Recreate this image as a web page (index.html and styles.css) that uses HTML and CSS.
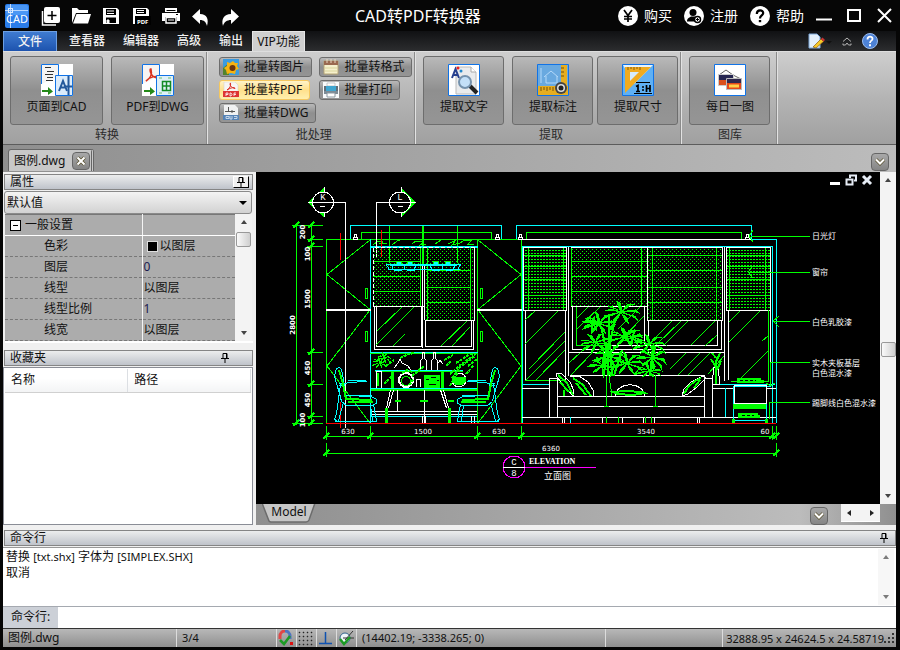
FILE: index.html
```html
<!DOCTYPE html>
<html lang="zh-CN">
<head>
<meta charset="utf-8">
<title>CAD转PDF转换器</title>
<link rel="stylesheet" href="styles.css">
</head>
<body>
<header class="titlebar">
  <div class="quick">
    <svg class="logo" viewBox="0 0 24 24" width="24" height="24" aria-hidden="true">
      <rect width="24" height="24" rx="2" fill="#2b7de9"/><rect x="1" y="1" width="22" height="10" rx="2" fill="#4a97f5"/>
      <path d="M5.500 0V24M0 6.500H23" stroke="#b9d8ff"/><rect x="3.500" y="4.500" width="4" height="4" fill="none" stroke="#dcebff"/>
      <text x="1" y="19" class="logo-text">CAD</text>
    </svg>
    <button aria-label="新建"><svg viewBox="0 0 20 20" width="20" height="20"><rect x="3" y="1" width="16" height="16" rx="2" fill="#fff"/><path d="M11 5v9M6.500 9.500h9" stroke="#000" stroke-width="1.500"/><path d="M1.500 5v14H15" fill="none" stroke="#fff" stroke-width="1.500"/></svg></button>
    <button aria-label="打开"><svg viewBox="0 0 20 20" width="20" height="20"><path d="M1 17V2h5l2 2h9v3H5z" fill="#fff"/><path d="M5.500 8H20l-3 9.500H2z" fill="#fff"/></svg></button>
    <button aria-label="保存"><svg viewBox="0 0 20 20" width="20" height="20"><path d="M2 2h14l2 2v14H2z" fill="#fff"/><path d="M5 3h10v6H5zM5 11.500h10V17H5z" fill="#000"/><path d="M6 5h7M6 7.500h7M6 14h2v3H6z" stroke="#fff" fill="#fff"/></svg></button>
    <button aria-label="另存为PDF"><svg viewBox="0 0 20 20" width="20" height="20"><path d="M2 2h14l2 2v14H2z" fill="#fff"/><path d="M5 3h10v5H5zM4 10h16v9H4z" fill="#000"/><path d="M6 4.500h7M6 6.500h7" stroke="#fff"/><text x="6" y="17.500" class="pdf-text">PDF</text></svg></button>
    <button aria-label="打印"><svg viewBox="0 0 20 20" width="20" height="20"><path d="M4 2h12v4H4zM1 7h18v8h-3v-4H4v4H1z" fill="#fff"/><path d="M5.500 4.500h9" stroke="#000"/><path d="M5 11.500h10v5.500H5z" fill="#000" stroke="#fff" stroke-width="1.500"/><path d="M7 14h6" stroke="#fff"/><path d="M15 8.500h2" stroke="#000"/></svg></button>
    <button aria-label="撤销"><svg viewBox="0 0 20 20" width="20" height="20"><path d="M9 3v5c7 0 9 5 7 12-1-4-3-6-7-6v4L1 10.500z" fill="#fff"/></svg></button>
    <button aria-label="重做"><svg viewBox="0 0 20 20" width="20" height="20"><path d="M10 3v5C3 8 0 13 2 20c1-4 4-6 8-6v4l8-7.500z" fill="#fff"/></svg></button>
  </div>
  <h1>CAD转PDF转换器</h1>
  <div class="account">
    <button><svg viewBox="0 0 20 20" width="20" height="20"><circle cx="10" cy="10" r="10" fill="#fff"/><path d="M6 4l4 5.500L14 4M10 9v7M6 10.500h8M6 13h8" stroke="#000" stroke-width="1.700" fill="none"/></svg>购买</button>
    <button><svg viewBox="0 0 20 20" width="20" height="20"><circle cx="10" cy="10" r="10" fill="#fff"/><circle cx="9" cy="6.500" r="3.500"/><path d="M3 15.500c0-4 3-4 4-5h4c2 1 3 2 3 5z"/><circle cx="13.500" cy="13.500" r="3" fill="#fff" stroke="#000" stroke-width="1.500"/><path d="M13.500 12v3M12 13.500h3" stroke="#000"/></svg>注册</button>
    <button><svg viewBox="0 0 20 20" width="20" height="20"><circle cx="10" cy="10" r="10" fill="#fff"/><path d="M6.800 8c0-5 6.700-4.500 6.400-.8C13 9.500 10 9.500 10 12.500" stroke="#000" stroke-width="2.200" fill="none"/><path d="M8.800 14h2.400v2.200H8.800z"/></svg>帮助</button>
  </div>
  <div class="winctl">
    <button aria-label="最小化"><svg viewBox="0 0 16 16" width="16" height="16"><path d="M0 11.500h16" stroke="#fff" stroke-width="2"/></svg></button>
    <button aria-label="最大化"><svg viewBox="0 0 16 16" width="16" height="16"><rect x="2" y="2" width="12" height="11" fill="none" stroke="#fff" stroke-width="2"/></svg></button>
    <button aria-label="关闭"><svg viewBox="0 0 16 16" width="16" height="16"><path d="M2 1l13 13M15 1L2 14" stroke="#fff" stroke-width="2"/></svg></button>
  </div>
</header>

<nav class="tabs">
  <button class="file">文件</button>
  <button>查看器</button>
  <button>编辑器</button>
  <button>高级</button>
  <button>输出</button>
  <button class="active">VIP功能</button>
  <div class="tab-tools">
    <svg viewBox="0 0 24 16" width="24" height="16" aria-hidden="true"><path d="M1 1h8l3 3v11H1z" fill="#e4f0fb" stroke="#7ea9da"/><path d="M5 14L13 6l2.500 2.500L8 15z" fill="#f7c928" stroke="#8b5a12" stroke-width=".7"/><path d="M13 6l1.500-1.500L17 7l-1.500 1.500z" fill="#c33"/><path d="M18 8h6l-3 3z" fill="#111"/></svg>
    <svg viewBox="0 0 10 10" width="10" height="10" aria-hidden="true"><path d="M1 5.500L5 2l4 3.500M1 7.500V9h2.500L5 7l1.500 2H9V7.500" fill="none" stroke="#b5b5b5"/></svg>
    <button aria-label="帮助"><svg viewBox="0 0 16 16" width="16" height="16"><circle cx="8" cy="8" r="7.500" fill="#4d82d6" stroke="#9bbdf0"/><path d="M5.500 6.500c0-4 5.300-3.500 5-.5C10.300 7.800 8 7.500 8 10" fill="none" stroke="#fff" stroke-width="1.800"/><path d="M7 11.300h2v2H7z" fill="#fff"/></svg></button>
  </div>
</nav>

<section class="ribbon">
  <div class="group">
    <div class="tools">
      <button class="big wide"><svg viewBox="0 0 32 32" width="32" height="32"><path d="M0 0h32v32H0z" fill="#fff"/><path d="M.5 20V.500h17V12" fill="#f4f4f4" stroke="#1173e6"/><path d="M4 3.500h6M6 7.500h7M4 10.500h8M6 13.500h6M5 16.500h7" stroke="#333"/><path d="M14.500 11.500h17v20h-17z" fill="#dcecfb" stroke="#1173e6"/><path d="M18 27l4-10 4 10M19.500 23.500h5" fill="none" stroke="#24599c" stroke-width="2"/><path d="M27.500 12v19M24 22.500h7" stroke="#24599c" stroke-width="2"/><path d="M1 26h6v-3l5 4.500L7 31v-3H1z" fill="#258a19"/></svg><span>页面到CAD</span></button>
      <button class="big wide"><svg viewBox="0 0 32 32" width="32" height="32"><path d="M0 0h32v32H0z" fill="#fff"/><path d="M.5 20V.500h17V12" fill="#f6f3f2" stroke="#1173e6"/><path d="M4 17c5-3 6-8 5-12-2-1-1 8 6 9 1-3-8-1-11 3z" fill="none" stroke="#d9321e" stroke-width="1.500"/><path d="M14.500 11.500h17v20h-17z" fill="#dff0f7" stroke="#1173e6"/><path d="M20.500 17.500h8v9h-8zM24.500 17.500v9M20.500 22h8" fill="none" stroke="#128a25" stroke-width="1.500"/><path d="M17 14h3M26 14h3M17 29h3M26 29h3" stroke="#6cc06f"/><path d="M2 26h6v-3l5 4.500L8 31v-3H2z" fill="#258a19"/></svg><span>PDF到DWG</span></button>
    </div>
    <div class="label">转换</div>
  </div>
  <div class="group batch">
    <div class="tools">
      <div class="stack">
        <button class="small"><svg viewBox="0 0 16 16" width="16" height="16"><path d="M0 0h16v16H0z" fill="#3b9be0"/><path d="M0 9l6-5v12H0z" fill="#52832d"/><path d="M10 2l2 2 3 0-1 3 2 3-3 1-1 4-4-1-4 1-1-4-2-2 3-2 0-4 3 1z" fill="#f6b313"/><circle cx="9.500" cy="9" r="3" fill="#6b3410"/></svg>批量转图片</button>
        <button class="small hot"><svg viewBox="0 0 16 16" width="16" height="16"><path d="M1 0h11l3 3v12H1z" fill="#f7f5f4" stroke="#ccc" stroke-width=".5"/><path d="M4 8c3-2 4-4 3.500-7C6 2 8 6 12 6.500 12 4.500 7 6 4 8z" fill="none" stroke="#db3028"/><path d="M0 9h16v6H0z" fill="#dd3434"/><path d="M3 14v-3h2v1.500H3M7 11h1l1 1.500L8 14H7zM11 14v-3h2M11 12.500h2" fill="none" stroke="#fff" stroke-width=".8"/></svg>批量转PDF</button>
        <button class="small"><svg viewBox="0 0 16 16" width="16" height="16"><path d="M1 0h11l3 3v12H1z" fill="#f0f1f2"/><path d="M5.500 2v5M2 6.500h10M9 5v3" stroke="#555"/><path d="M0 10h16v5H0z" fill="#5683b6"/><path d="M3 11.500h3v2H3zM7 11v3h2v-3M11 11.500h3v2h-3" stroke="#dde9f5" fill="none" stroke-width=".8"/></svg>批量转DWG</button>
      </div>
      <div class="stack">
        <button class="small"><svg viewBox="0 0 16 16" width="16" height="16"><path d="M1 2h14v13H1z" fill="#f6f1cd" stroke="#b5a474"/><path d="M1 2h14v4H1z" fill="#9a6a50"/><path d="M4 0v4M8 0v4M12 0v4" stroke="#e9d7c1"/><path d="M2 9h12M2 12h12" stroke="#d9d49b"/></svg>批量转格式</button>
        <button class="small"><svg viewBox="0 0 16 16" width="16" height="16"><path d="M0 0h16v16H0z" fill="#f8fafb"/><path d="M4 1h8v3H4z" fill="#fff" stroke="#aaa" stroke-width=".6"/><path d="M1 4h2v8H1zM13 4h2v8h-2z" fill="#5f6f7b"/><path d="M3 4h10v5H3z" fill="#3fa6d0"/><path d="M1 9h14v3H1z" fill="#7d8b95"/><path d="M4 11h8v4H4z" fill="#fff" stroke="#8b979f"/></svg>批量打印</button>
      </div>
    </div>
    <div class="label">批处理</div>
  </div>
  <div class="group">
    <div class="tools">
      <button class="big"><svg viewBox="0 0 32 32" width="32" height="32"><path d="M.5.5h31v31H.5z" fill="#fff" stroke="#1173e6"/><path d="M8 3h15l5 5v22H8z" fill="#e9ebed" stroke="#bbb"/><path d="M23 3v5h5" fill="#fff" stroke="#aaa"/><path d="M4 14L7.500 5 11 14M5 11h5" fill="none" stroke="#27408f" stroke-width="2"/><circle cx="10" cy="4" r="1.500" fill="#e22"/><circle cx="13" cy="7" r="1.500" fill="#28c"/><path d="M22 22l7 7" stroke="#222" stroke-width="4"/><circle cx="17" cy="18" r="6" fill="#c4e0f8" stroke="#7592ad" stroke-width="2"/></svg><span>提取文字</span></button>
      <button class="big"><svg viewBox="0 0 32 32" width="32" height="32"><path d="M.5.5h31v31H.5z" fill="#69a9e0" stroke="#1173e6"/><path d="M1 22h30v9H1zM24 1h6v21h-6z" fill="#e6ad20"/><path d="M4 23v4M7 23v3M10 23v4M13 23v3M16 23v4M24 4h3M24 8h3M24 12h3" stroke="#765008"/><path d="M1 1h21v20H1z" fill="#69a9e0"/><path d="M7 13l7-6 7 6M9 12v7h11v-7M4 4v15" stroke="#b4d9fa" fill="none"/><circle cx="24" cy="24" r="6" fill="#444"/><circle cx="24" cy="24" r="4" fill="#ddd"/><circle cx="24" cy="24" r="2.500" fill="#222"/></svg><span>提取标注</span></button>
      <button class="big tight"><svg viewBox="0 0 32 32" width="32" height="32"><path d="M.5.5h31v31H.5z" fill="#5fb0f4" stroke="#1173e6"/><path d="M1 1h30L12 20z" fill="#e6f3fd"/><path d="M3 3h26L3 29z" fill="#f0ab1f"/><path d="M8 8h9l-9 9z" fill="#d6ecfd"/><path d="M6 3v3M9 3v2M12 3v3M15 3v2M18 3v3" stroke="#8a5b08"/><path d="M14 18.500h14M12 29.500h18" stroke="#000"/><path d="M14 22.500l2-1v6M14 27.500h4M20 23h2M20 26h2M24.500 21v7M24 24.500h4M28 21v7" stroke="#000" fill="none" stroke-width="1.700"/></svg><span>提取尺寸</span></button>
    </div>
    <div class="label">提取</div>
  </div>
  <div class="group">
    <div class="tools">
      <button class="big"><svg viewBox="0 0 32 32" width="32" height="32"><path d="M.5.5h31v31H.5z" fill="#fff" stroke="#1173e6"/><path d="M5 11l7-5 7 5M13 15l6-4 8 4" stroke="#666" fill="none"/><path d="M4.500 10.500h15v11h-15z" fill="#262652" stroke="#ccc"/><path d="M5 16h14v5H5z" fill="#db4f1b"/><path d="M12.500 14.500h15v11h-15z" fill="#30284e" stroke="#bbb"/><path d="M13 19h14v6H13z" fill="#e5481a"/><path d="M15 22h10" stroke="#ffd04a" stroke-width="3"/></svg><span>每日一图</span></button>
    </div>
    <div class="label">图库</div>
  </div>
</section>

<div class="doc-tabs">
  <div class="doc-tab"><span>图例.dwg</span><button aria-label="关闭图例.dwg"><svg viewBox="0 0 10 10" width="10" height="10"><path d="M1.500 1.500l7 7M8.500 1.500l-7 7" stroke="#5b5332" stroke-width="3.600"/><path d="M1.500 1.500l7 7M8.500 1.500l-7 7" stroke="#fff" stroke-width="2"/></svg></button></div>
  <button class="drop" aria-label="文档列表"><svg viewBox="0 0 10 10" width="10" height="10"><path d="M1 2.500l4 4 4-4" stroke="#5b5332" stroke-width="3.500" fill="none"/><path d="M1 2.500l4 4 4-4" stroke="#fff" stroke-width="2" fill="none"/></svg></button>
</div>

<main class="work">
  <aside class="side">
    <div class="pane-title"><h2>属性</h2><button class="pin raised" aria-label="固定属性"><svg viewBox="0 0 8 10" width="8" height="10"><path d="M2 5V.500h4V5M5.500 1v4M0 5.500h8M4 6v4" fill="none" stroke="#000"/></svg></button></div>
    <div class="combo"><select aria-label="对象"><option>默认值</option></select></div>
    <div class="props">
      <table>
        <tbody>
          <tr class="head"><th scope="row"><button class="minus" aria-label="折叠"></button>一般设置</th><td></td></tr>
          <tr><th scope="row">色彩</th><td><i class="swatch"></i>以图层</td></tr>
          <tr><th scope="row">图层</th><td class="num">0</td></tr>
          <tr><th scope="row">线型</th><td>以图层</td></tr>
          <tr><th scope="row">线型比例</th><td class="num">1</td></tr>
          <tr><th scope="row">线宽</th><td>以图层</td></tr>
        </tbody>
      </table>
      <div class="vscroll"><button class="up" aria-label="向上"></button><div class="thumb"></div><button class="down" aria-label="向下"></button></div>
    </div>
    <div class="pane-title fav"><h2>收藏夹</h2><button class="pin" aria-label="固定收藏夹"><svg viewBox="0 0 8 10" width="8" height="10"><path d="M2 5V.500h4V5M5.500 1v4M0 5.500h8M4 6v4" fill="none" stroke="#000"/></svg></button></div>
    <div class="list">
      <table><thead><tr><th>名称</th><th>路径</th></tr></thead></table>
    </div>
  </aside>

  <section class="view">
    <div class="canvas">
      <svg class="drawing" viewBox="256 172 624 332" preserveAspectRatio="xMinYMin meet" role="img" aria-label="立面图">
        <defs>
          <pattern id="dots" width="4" height="4" patternUnits="userSpaceOnUse"><path d="M0 1h1v1H0zM2 3h1v1H2z" fill="#0f0"/></pattern>
          <pattern id="dense" width="3" height="3" patternUnits="userSpaceOnUse"><path d="M0 1h2v1H0z" fill="#0f0"/></pattern>
          <g id="burst"><path d="M0 0l-9-3-6 3 5 0 10 1 -13 4 -4 5 8-3 9-5 -6 8 -2 6 6-6 3-7 3 8 4 5 -1-7 -5-6 9 4 6 6 -3-7 -11-4 10-1 6 3 -5-6 -11 2 7-7 5-1 -8-1 -5 8 -1-9 -4-3 1 7 2 6 -7-6 -5 0z" fill="#0f0"/></g>
          <g id="lamp" fill="none" stroke="#fff"><path d="M.5 5.500v-2h4v2zM1.500 3V.500h2V3"/></g>
          <g id="chair" fill="none">
            <path stroke="#0ff" d="M335.500 371.500l1-3 3-1 2 2 2 10 2 16 26 1 5 3v4l-5 2h-25l-5-4-2-8-5-17zM340.500 384l-4 30-2 5 3 3M343.500 402l-5 19M373.500 404l3 17M370.500 405l2 16M335 421.500h42M339 386l8-3 20-2M348 380.500h18M339 383l6 2M346 395.500h26"/>
            <path stroke="#0f0" stroke-width="2" d="M339 370l4 14 3 15M345 399l27 1M348 402h25"/>
          </g>
          <g id="tick"><path d="M-3 3L3-3" stroke="#0f0" stroke-width="2"/></g>
        </defs>

        <!-- wall elevation outlines -->
        <g fill="none" stroke="#0f0">
          <path d="M292 225.500h13M303 225.500h20M296.500 225v200M311.500 225v200M307 239.500h16M307 246.500h16M307 352.500h16M307 384.500h16M307 416.500h16M292 423.500h31"/>
          <path d="M326.500 423V239.500h195V423M477.500 239v184M361.500 239v-6.500h130v6.500M526.500 239v-6.500h215v6.500"/>
          <path d="M370 240l-43 34.500 43 35M370 310l-43 56 43 57M478 240l43 34.500-43 35M478 310l43 56-43 57"/>
          <path d="M365.500 288.500h2v10h-2zM480.500 288.500h2v10h-2zM365.500 331.500h2v10h-2zM480.500 331.500h2v10h-2z"/>
          <path d="M389.500 225v38M457.500 225v38"/>
          <path d="M423 225v39" stroke-width="2"/>
          <path d="M326 436.500h450M326 453.500h450M326.500 426v14M370.500 426v14M477.500 426v14M521.500 426v14M772.500 426v14M776.500 426v14M326.500 443v14M776.500 443v14"/>
        </g>
        <g stroke="#0f0"><use href="#tick" x="296" y="225"/><use href="#tick" x="311" y="225"/><use href="#tick" x="311" y="239"/><use href="#tick" x="311" y="246"/><use href="#tick" x="311" y="352"/><use href="#tick" x="311" y="384"/><use href="#tick" x="311" y="416"/><use href="#tick" x="311" y="423"/><use href="#tick" x="296" y="423"/><use href="#tick" x="326" y="436"/><use href="#tick" x="370" y="436"/><use href="#tick" x="477" y="436"/><use href="#tick" x="521" y="436"/><use href="#tick" x="772" y="436"/><use href="#tick" x="776" y="436"/><use href="#tick" x="326" y="453"/><use href="#tick" x="776" y="453"/></g>
        <g fill="none" stroke="#0ff">
          <path d="M350.500 239v-13.500h151V239M516.500 239v-13.500h235V239M370.500 239v184M751 239.500h25.500V423M522 246.500h250.500V423M522.500 246v177"/>
          <path d="M371 246.500h107" stroke-width="2"/>
        </g>
        <path d="M521 239.500h230" stroke="#fff"/>
        <path d="M326 310h45M477 310h45" stroke="#fff" stroke-width="2"/>
        <use href="#lamp" x="353" y="234"/><use href="#lamp" x="495" y="234"/><use href="#lamp" x="518" y="234"/><use href="#lamp" x="745" y="234"/>
        <path d="M373 245l5-4 5 1-4 2 8-1M392 245l5-4 3-1M412 244l4-3 8 0-4 4 6-1M435 244l6-4M448 244l8-4-4 5 8-2 5-3 7 0-4 4 6 0" fill="none" stroke="#0f0"/>

        <!-- section markers -->
        <path d="M308 202.500l16-15v30zM416 202.500l-15-15v30z" fill="#0f0"/>
        <circle cx="323" cy="202.500" r="10.500" fill="#000" stroke="#fff"/><circle cx="400" cy="202.500" r="10.500" fill="#000" stroke="#fff"/>
        <g fill="none" stroke="#fff"><path d="M308 202.500h37.500V428M416 202.500h-39.500V257M320 206.500h5M398 206.500h5M324.500 187v5M324.500 213v4M401.500 187v5M401.500 213v4"/></g>
        <g class="tag"><text x="323" y="200">K</text><text x="400" y="200">L</text></g>
        <path d="M340.500 233v27M381.500 230v27M340.500 402v26" stroke="#f00"/>

        <!-- left window and blinds -->
        <path d="M374 248h48v58h-48z" fill="url(#dots)"/><path d="M425 248h48v72h-48z" fill="url(#dots)"/>
        <path d="M373 261.500h48M373 276.500h48M373 291.500h48M420.500 248v58M427 270.500h44M427 287.500h44M427 302.500h44M427.500 248v72M470.500 248v72" stroke="#0f0"/>
        <path d="M373.500 306V247.500h101" stroke="#fff" fill="none" stroke-dasharray="4 2"/>
        <path d="M373 306.500h51M424.500 264v56M474.500 247v73.500h-50M422.500 264v84M374.500 306v43.500h99V320M376.500 306v40.500h45V306M425.500 320v26.500h46V320" stroke="#fff" fill="none"/>
        <path d="M414 307l-38 38M405 334l-12 12M467 321l-26 25M402 307l-25 24M470 327l-18 19" stroke="#0f0"/>
        <path d="M386 264h75M388 269.500h72M386 264l3 5M461 264l-3 5M392 265l1 5M404 265v5M416 265l-2 5M430 265l2 5M442 265v5M455 265l-2 5" stroke="#0ff" fill="none"/>
        <path d="M390 264.500h67M394 269.500h8M407 269.500h8M432 269.500h8M446 269.500h7" stroke="#0ff" stroke-width="2"/>
        <path d="M396.500 264v-3h5v3M407.500 264v-3h5v3M433.500 264v-3h5v3M445.500 264v-3h5v3" stroke="#0f0" fill="#0ff"/>

        <!-- sideboard -->
        <path d="M370 352.500h108M375 370.500h88M371 389.500h106" stroke="#0f0" stroke-width="2"/>
        <path d="M370 352.500h108M375 370.500h88M371 388.500h106M371 416.500h106" stroke="#0ff"/>
        <path d="M376 388v-17h5v17M397.500 390v21M424.500 390v33M371 411.500h106M371 414.500h106M390.500 390l-4 18v15M393.500 390l-5 18M443.500 390l5 18v15M440.500 390l6 18M422 416v7h3v-7M471.500 416v7M474.500 416v7" fill="none" stroke="#fff"/>
        <path d="M420.500 370v-9l2-3v-6h2v6l2 3v9M431.500 370v-9l2-3v-6h2v6l2 3v9M394 368l4-5 2-4 2 4 6 3 3 4M416.500 387v-8h4v8M437 365l3-5 3 4" fill="none" stroke="#fff"/>
        <path d="M386 408v15M449 408v15M392 371v17M442 371v17" stroke="#0f0" stroke-width="3"/>
        <path d="M395 401h6M420 401h8M448 401h6M378 373v13" stroke="#0f0" stroke-width="2"/>
        <path d="M424 375h16v13h-16z" fill="#0f0"/><path d="M426 379h3M431 377h5M429 384h7M437 380h2" stroke="#000"/>
        <circle cx="406" cy="380" r="7" fill="none" stroke="#fff" stroke-width="2"/><circle cx="406" cy="381" r="4.500" fill="none" stroke="#0f0"/>
        <circle cx="459" cy="380" r="7" fill="none" stroke="#fff"/><path d="M452 377h14v5l-4 3h-6l-4-3z" fill="#0f0"/>
        <use href="#burst" transform="translate(379 362) scale(.45)"/><use href="#burst" transform="translate(383 357) scale(.4)"/>
        <path d="M386 366l8-6M400 358l9-4 5-1M452 378l8-11 15-11M450 374l9-8 14-10M446 366l5-5M468 366l9-7M456 363l14-9M384 384l8-8M412 376l12-10M444 360l9-5M470 354l6 0M466 374l8-9M450 386l9-16M402 373l5-3 5 2M409 385l5-6" fill="none" stroke="#0f0" stroke-dasharray="3 1" stroke-width="2"/>
        <use href="#chair"/><use href="#chair" transform="translate(834 0) scale(-1 1)"/>

        <!-- right window and blinds -->
        <path d="M524 248h42v62h-42zM727 248h43v62h-43z" fill="url(#dense)"/>
        <path d="M572 248h75v58h-75zM648 248h74v72h-74z" fill="url(#dots)"/>
        <path d="M528.500 248v62M563.500 248v62M524 255.500h42M524 266.500h42M524 279.500h42M524 295.500h42M729.500 248v62M765.500 248v62M727 255.500h43M727 266.500h43M727 279.500h43M727 295.500h43M571.500 247v59M641.500 248v58M572 261.500h75M572 276.500h75M572 291.500h75M652.500 248v72M716.500 248v72M648 255.500h74M648 270.500h74M648 287.500h74M648 302.500h74" stroke="#0f0"/>
        <path d="M523.500 247.500h43v63h-43zM726.500 247.500h44v63h-44zM571 247.500h151M647.500 248v72.500h74.500V247M571 306.500h76M568.500 247v129M565.500 310v70M525.500 310v70M724.500 247v134M728.500 310v70M770.500 310v70M572.500 306v43.500h148.500V321M648.500 321v24M644.500 306v39M576 345.500h141.500V321M568 352.500h157" fill="none" stroke="#fff"/>
        <path d="M576.500 307v38.500h28M768.500 310v71h-38M525 380.500h41" stroke="#0f0" fill="none"/>
        <path d="M558 311l-33 33M535 311l-10 9M565 332l-36 37M565 341l-39 39M565 350l-29 30M588 307l-12 12M600 307l-23 22M640 307l-22 22M644 316l-26 27M672 321l-22 22M681 321l-25 24M688 321l-24 24M715 321l-24 24M717 335l-12 11M760 311l-31 31M740 311l-11 11M768 351l-29 29M768 336l-6 5M580 353l-11 10M592 353l-22 23M700 353l-22 22M710 353l-22 22M686 353l-16 16M724 356l-16 18M640 368l-7 8" stroke="#0f0"/>

        <!-- sofa and side table -->
        <path d="M522 388.500h27M712 388.500h21M549.500 378.500h8v39h-8zM704.500 378.500h8v39h-8zM570 375.500h134v3M557 396.500h147M557 406.500h147M522 417.500h254M562.500 417v6M564.500 417v6M697.500 417v6M699.500 417v6M602.500 417.500h20v6h-20zM643.500 417.500h11v6h-11z" stroke="#fff" fill="none"/>
        <path d="M556 373l6 1 8 8 4 9-1 5-8-9-9-11zM570 376l9 0 9 6 5 8v6M615 396c2-15 28-15 30 0M682 396l2-7 7-7 12-6 3 2-9 9-9 7z" stroke="#fff" fill="none"/>
        <path d="M558 375l9 8 6 12M560 382l9 10M573 378l10 7 8 11M576 383l10 12M613 392l12-1 18 1 2 1-12 2-16-1zM684 394l4-7 7-6 6-3M694 388l6-8M564 390v6" stroke="#0f0" fill="none" stroke-width="2"/>
        <path d="M606.500 376v30M655.500 375v31M604 406.500h5M653 406.500h5M609 376l3 20M606.500 417v6M618.500 417v6M645.500 417v6M651.500 417v6" stroke="#0f0"/>
        <path d="M522 384.500h27M712 384.500h63M725.500 388v29M733.500 386v34h33v-34M570.500 417v6M733 386.500h38" stroke="#0ff" fill="none"/>
        <path d="M734 385.500h32v18h-32zM713.500 367h5l1 17h-7zM766 388.500h10" stroke="#fff" fill="none"/>
        <path d="M733 404h33v5h-33zM737 378h24v2h3v3h-27zM738 413h20v2h2v3h-22zM732 419h3v4h-3zM765 419h3v4h-3z" fill="#0f0"/>
        <path d="M740 380.500h16M742 415.500h12" stroke="#000" stroke-dasharray="3 2"/>
        <path d="M716 384v-24M716 367l-5-8M716 362l4-9M716 358l-4-5M717 370l4-9" stroke="#0f0" fill="none" stroke-width="2"/>
        <path d="M326 423.500h450" stroke="#f00"/>

        <!-- potted palm -->
        <g>
          <path d="M604 376l2-28-5-21M612 376l-2-35 6-24M608 376l1-60M650 376l3-30M622 350l-8 26M610 330l10-17" fill="none" stroke="#0f0" stroke-width="2"/>
          <use href="#burst" transform="translate(620 311) scale(1.1 .8)"/>
          <use href="#burst" transform="translate(598 322) scale(1 .8)"/>
          <use href="#burst" transform="translate(624 336) scale(1.1 .7)"/>
          <use href="#burst" transform="translate(594 342) scale(1 .7) rotate(-18)"/>
          <use href="#burst" transform="translate(648 343) scale(1 .7)"/>
          <use href="#burst" transform="translate(608 354) scale(.9)"/>
          <use href="#burst" transform="translate(626 362) scale(1 .8)"/>
          <use href="#burst" transform="translate(652 356) scale(.9) rotate(20)"/>
          <use href="#burst" transform="translate(602 364) scale(.8) rotate(20)"/>
          <use href="#burst" transform="translate(648 370) scale(.8 .5)"/>
          <use href="#burst" transform="translate(632 336) scale(.7 .6) rotate(30)"/>
          <use href="#burst" transform="translate(592 322) scale(.6 .5) rotate(30)"/>
        </g>

        <!-- leaders -->
        <path d="M751 236.500h59M749 272.500h61M773 321.500h37M770.500 386v-23.500h39.500M769.500 419v-16.500h40.500M753 230l-4 6 4 6M753 266l-5 6 5 6M779 316l-6 5 6 6M766 383l4 3 5-3" fill="none" stroke="#0f0"/>
        <g class="note"><text x="812" y="239">日光灯</text><text x="812" y="275">窗帘</text><text x="812" y="325">白色乳胶漆</text><text x="812" y="366">实木夹板基层</text><text x="812" y="376">白色混水漆</text><text x="812" y="406">踢脚线白色混水漆</text></g>
        <g class="dim"><text x="348" y="434">630</text><text x="423" y="434">1500</text><text x="499" y="434">630</text><text x="646" y="434">3540</text><text x="765" y="434">60</text><text x="551" y="451">6360</text></g>
        <g class="dim bold">
          <text transform="translate(305 232) rotate(-90)">200</text><text transform="translate(310 254) rotate(-90)">100</text><text transform="translate(310 299) rotate(-90)">1500</text><text transform="translate(295 325) rotate(-90)">2800</text><text transform="translate(310 368) rotate(-90)">450</text><text transform="translate(310 400) rotate(-90)">450</text><text transform="translate(305 420) rotate(-90)">100</text>
        </g>
        <circle cx="514" cy="467" r="11" fill="none" stroke="#f0f"/><path d="M525 467.500h71" stroke="#f0f"/><path d="M503 467.500h22" stroke="#fff"/>
        <g class="tag"><text x="514" y="465">C</text><text x="514" y="476">8</text></g>
        <text class="elev" x="529" y="464">ELEVATION</text><text class="note title" x="544" y="479">立面图</text>
      </svg>
      <div class="mdi">
        <button aria-label="最小化图纸"><svg viewBox="0 0 12 12" width="12" height="12"><path d="M1 8h10v3H1z" fill="#fff"/></svg></button>
        <button aria-label="还原图纸"><svg viewBox="0 0 12 12" width="12" height="12"><path d="M5 4V1.500h6v5H9M1.500 5.500h6v5h-6z" fill="none" stroke="#e6ecf5" stroke-width="2"/></svg></button>
        <button aria-label="关闭图纸"><svg viewBox="0 0 12 12" width="12" height="12"><path d="M2 2l8 8M10 2l-8 8" stroke="#e6ecf5" stroke-width="3"/></svg></button>
      </div>
    </div>
    <div class="vscroll tall"><button class="up" aria-label="向上滚动"></button><div class="track"><div class="thumb"></div></div><button class="down" aria-label="向下滚动"></button></div>
    <div class="sheetbar">
      <button class="sheet"><svg viewBox="0 0 54 20" width="54" height="20" aria-hidden="true"><path d="M0-1l7 18q1 1 2 1h35q2 0 3-2l6-17" fill="#c6c6c6" stroke="#6c6c6c" stroke-width="1.500"/></svg><span>Model</span></button>
      <button class="drop" aria-label="布局列表"><svg viewBox="0 0 10 10" width="10" height="10"><path d="M1 2.500l4 4 4-4" stroke="#5b5332" stroke-width="3.500" fill="none"/><path d="M1 2.500l4 4 4-4" stroke="#fff" stroke-width="2" fill="none"/></svg></button>
      <div class="hscroll"><button class="left" aria-label="向左"></button><button class="right" aria-label="向右"></button></div>
    </div>
  </section>
</main>

<section class="command">
  <div class="pane-title"><h2>命令行</h2><button class="pin" aria-label="固定命令行"><svg viewBox="0 0 8 10" width="8" height="10"><path d="M2 5V.500h4V5M5.500 1v4M0 5.500h8M4 6v4" fill="none" stroke="#000"/></svg></button></div>
  <div class="log">
    <div class="lines">
      <p>替换 <span class="latin">[txt.shx]</span> 字体为 <span class="latin">[SIMPLEX.SHX]</span></p>
      <p>取消</p>
    </div>
    <div class="vscroll dim-bar"><button class="up" aria-label="日志向上"></button><button class="down" aria-label="日志向下"></button></div>
  </div>
  <div class="prompt"><label for="cmd">命令行:</label><input id="cmd" type="text"></div>
</section>

<footer class="status">
  <span class="name">图例.dwg</span>
  <span class="page latin">3/4</span>
  <button aria-label="对象捕捉"><svg viewBox="0 0 16 16" width="16" height="16"><path d="M2 9V6a5 5 0 0 1 5-5" fill="none" stroke="#e04747" stroke-width="3"/><path d="M7 1a5 5 0 0 1 5 5v3" fill="none" stroke="#4f74bf" stroke-width="3"/><path d="M2 10l4 4 6-8" fill="none" stroke="#1c9c24" stroke-width="2.500"/><path d="M12 12h3v3h-3z" fill="#d11"/></svg></button>
  <button aria-label="栅格"><svg viewBox="0 0 16 16" width="16" height="16"><path d="M1 2h1v1H1zM5 2h1v1H5zM9 2h1v1H9zM13 2h1v1h-1zM1 6h1v1H1zM13 6h1v1h-1zM5 6h1v1H5zM9 6h1v1H9zM1 10h1v1H1zM5 10h1v1H5zM9 10h1v1H9zM13 10h1v1h-1zM1 14h1v1H1zM5 14h1v1H5zM9 14h1v1H9zM13 14h1v1h-1z" fill="#111" stroke="#333" stroke-width=".5"/></svg></button>
  <button aria-label="正交"><svg viewBox="0 0 16 16" width="16" height="16"><path d="M7.500 2v11M1 13.500h13" stroke="#0f52b0" stroke-width="1.500"/></svg></button>
  <button aria-label="追踪"><svg viewBox="0 0 16 16" width="16" height="16"><circle cx="7" cy="8" r="5" fill="#eef4fa" stroke="#33658e"/><path d="M5 8h11M7 10l8-9" stroke="#333"/><path d="M2 9l4 5 6-7" fill="none" stroke="#1c9c24" stroke-width="2.500"/></svg></button>
  <span class="coords latin">(14402.19; -3338.265; 0)</span>
  <span class="blank"></span>
  <span class="extent latin">32888.95 x 24624.5 x 24.58719<svg viewBox="0 0 10 10" width="10" height="10" aria-hidden="true"><path d="M8 0h2v2H8zM8 4h2v2H8zM8 8h2v2H8zM4 4h2v2H4zM4 8h2v2H4zM0 8h2v2H0z" fill="#333"/></svg></span>
</footer>
</body>
</html>
```
FILE: styles.css
```css
* { box-sizing: border-box; }

html, body { height: 100%; }

body {
  margin: 0;
  padding: 0 4px 3px 3px;
  display: flex;
  flex-direction: column;
  background: #060606;
  color: #111;
  font: 12px/16px "Noto Sans", "Noto Sans CJK SC", sans-serif;
  overflow: hidden;
}

button, input, select { font: inherit; color: inherit; margin: 0; }
button { padding: 0; border: 0; background: none; }
h1, h2, p { margin: 0; font-size: 12px; font-weight: 400; }
svg { display: block; flex: none; }
.latin { font-size: 11px; }

/* Title bar */
.titlebar {
  flex: none;
  height: 31px;
  display: flex;
  align-items: center;
  color: #fff;
}
.quick { display: flex; align-items: center; gap: 10px; padding-left: 2px; }
.logo { margin-right: 2px; }
.logo-text { font: 11px "Noto Sans", sans-serif; fill: #fff; }
.pdf-text { font: bold 6px "Noto Sans", sans-serif; fill: #fff; }
.titlebar h1 { flex: 1; padding-left: 114px; font-size: 16px; line-height: 24px; white-space: nowrap; }
.account { display: flex; gap: 12px; font-size: 14px; }
.account button { display: flex; align-items: center; gap: 6px; }
.winctl { display: flex; gap: 14px; padding: 0 4px 0 12px; }

/* Ribbon tabs */
.tabs {
  flex: none;
  height: 20px;
  display: flex;
  background: linear-gradient(#101113, #2c2d2f);
  color: #f2f2f2;
}
.tabs > button { padding: 0 9px; font-weight: 500; }
.tabs .file { width: 54px; margin-right: 3px; background: linear-gradient(#3f7bd0, #1d53ae); border: 1px solid #6d9fe2; border-bottom: 0; padding: 0; }
.tabs .active { width: 53px; padding: 0; background: #cfcfcf; color: #111; border: 1px solid #e6e6e6; border-bottom: 0; font-weight: 400; }
.tab-tools { margin-left: auto; display: flex; align-items: center; gap: 10px; padding-right: 18px; }

/* Ribbon */
.ribbon {
  flex: none;
  height: 94px;
  display: flex;
  padding-left: 3px;
  background: linear-gradient(#cecece, #b4b4b4 50%, #a0a0a0);
  border-top: 1px solid #dedede;
  border-bottom: 1px solid #5c5c5c;
}
.group {
  display: flex;
  flex-direction: column;
  padding: 4px 3px 0 4px;
  border-right: 1px solid #e2e2e2;
  box-shadow: inset -1px 0 #8b8b8b;
}
.group + .group { padding-left: 7px; }
.group:last-child { padding-right: 7px; }
.tools { display: flex; gap: 8px; height: 72px; }
.group .label { height: 17px; text-align: center; color: #2b2b2b; }
.big, .small {
  border: 1px solid #6d6d6d;
  border-radius: 3px;
  background: linear-gradient(#b9b9b9, #8f8f8f 50%, #959595);
}
.big {
  width: 81px;
  height: 69px;
  display: flex;
  flex-direction: column;
  align-items: center;
  gap: 3px;
  padding-top: 7px;
}
.wide { width: 93px; }
.tight { margin-left: -4px; }
.batch .tools { gap: 3px; padding-left: 4px; }
.stack { display: flex; flex-direction: column; align-items: flex-start; gap: 3px; padding-top: 1px; }
.small { height: 20px; display: flex; align-items: center; gap: 5px; padding: 0 7px 0 3px; white-space: nowrap; }
.hot { border-color: #f5c75f; background: linear-gradient(#fff3c9, #ffe08c 50%, #ffefae); }

/* Document tabs */
.doc-tabs {
  flex: none;
  height: 27px;
  display: flex;
  align-items: flex-end;
  justify-content: space-between;
  padding: 0 7px 1px 5px;
  background: linear-gradient(90deg, #8f8f8f, #bcbcbc);
}
.doc-tab {
  height: 22px;
  display: flex;
  align-items: center;
  gap: 7px;
  padding: 0 1px 0 5px;
  background: #c8c8c8;
  border: 1px solid #666;
  border-right: 3px double #666;
  border-bottom: 0;
  border-radius: 3px 3px 0 0;
}
.doc-tab button, .drop {
  width: 18px;
  height: 18px;
  display: grid;
  place-items: center;
  border: 1px solid #666;
  border-radius: 4px;
  background: linear-gradient(#a8a8a8, #858585);
}

/* Work area */
.work { flex: 1; min-height: 0; display: flex; background: #f0f0f0; }
.side { width: 250px; margin-right: 3px; flex: none; display: flex; flex-direction: column; padding-top: 2px; }
.pane-title {
  flex: none;
  height: 16px;
  display: flex;
  align-items: center;
  justify-content: space-between;
  margin-left: 1px;
  padding: 0 3px 0 5px;
  border: 1px solid #858585;
  background: linear-gradient(#eceded, #bfc3ca);
}
.pin { display: grid; place-items: center; width: 16px; height: 12px; }
.raised { border: 1px solid #fff; border-right-color: #000; border-bottom-color: #000; background: #f0f0f0; }
.combo {
  position: relative;
  flex: none;
  margin: 1px 1px 0;
  border: 1px solid #8a8a8a;
  border-radius: 3px;
  background: linear-gradient(#f4f4f4, #d2d2d2);
}
.combo select { width: 100%; height: 21px; padding: 0 2px; border: 0; background: none; appearance: none; }
.combo::after { content: ""; position: absolute; right: 4px; top: 9px; border: 4px solid transparent; border-top-color: #000; border-bottom: 0; }
.props { display: flex; flex: none; margin-left: 2px; padding-right: 1px; background: #f0f0f0; border-bottom: 2px solid #fff; }
table { border-collapse: collapse; }
.props table { flex: 1; background: #acacac; table-layout: fixed; }
.props th, .props td { height: 21px; padding: 0; font-weight: 400; text-align: left; border-bottom: 1px dashed #777; line-height: 16px; }
.props th { width: 137px; padding-left: 39px; border-right: 1px solid #f4f4f4; }
.props td { padding-left: 1px; }
.props .head th { padding-left: 5px; }
.props .head th, .props .head td { border-bottom: 1px solid #fff; border-top: 1px solid #777; }
.minus { display: inline-block; position: relative; width: 11px; height: 11px; margin-right: 4px; vertical-align: -1px; border: 1px solid #000; background: #fff; }
.minus::after { content: ""; position: absolute; left: 2px; top: 4px; width: 5px; height: 1px; background: #000; }
.swatch { display: inline-block; width: 11px; height: 11px; margin: 0 2px 0 3px; vertical-align: -2px; background: #000; border: 1px solid #ddd; }
.num { color: #1b1b50; }

.vscroll { flex: none; width: 17px; display: flex; flex-direction: column; align-items: center; background: #f3f3f3; }
.vscroll button, .hscroll button { width: 16px; height: 16px; display: grid; place-items: center; }
.vscroll button::before, .hscroll button::before { content: ""; border: 3px solid transparent; }
.vscroll .up::before { border-bottom: 4px solid #444; border-top: 0; }
.vscroll .down::before { border-top: 4px solid #444; border-bottom: 0; }
.vscroll .down { margin-top: auto; }
.vscroll .thumb { width: 15px; height: 15px; margin-top: 2px; border: 1px solid #999; border-radius: 2px; background: linear-gradient(90deg, #fafafa, #cfcfcf); }

.fav { margin-top: 7px; }
.side .fav { padding-right: 19px; }
.list { flex: 1; min-height: 0; margin-top: 1px; border: 1px solid #8a8d96; background: #fff; padding: 1px; }
.list table { width: 100%; table-layout: fixed; }
.list th { height: 23px; padding: 0 6px; text-align: left; font-weight: 400; background: linear-gradient(#fff 40%, #f3f4f5); border-right: 1px solid #dcdfe3; border-bottom: 1px solid #d0d0d0; }

.view { flex: 1; min-width: 0; display: grid; grid-template-columns: 1fr 16px; grid-template-rows: 1fr 21px; }
.canvas { position: relative; min-height: 0; overflow: hidden; background: #000; }
.drawing { width: 100%; height: 100%; shape-rendering: crispEdges; }
.mdi { position: absolute; top: 2px; right: 7px; display: flex; gap: 4px; }
.tall { width: 16px; }
.track { flex: 1; display: flex; flex-direction: column; justify-content: center; padding-top: 20px; }
.sheetbar { grid-column: 1 / 3; display: flex; align-items: flex-start; background: linear-gradient(90deg, #8f8f8f, #bcbcbc 85%, #8f8f8f); }
.sheet { display: grid; margin-left: 6px; }
.sheet svg, .sheet span { grid-area: 1 / 1; }
.sheet svg { overflow: hidden; }
.sheetbar .drop { margin: 3px 13px 0 auto; }
.hscroll { width: 39px; height: 18px; margin-right: 16px; display: flex; justify-content: space-between; align-items: center; background: #f3f3f3; border-bottom: 1px solid #fff; }
.hscroll .left::before { border-right: 4px solid #222; border-left: 0; }
.hscroll .right::before { border-left: 4px solid #222; border-right: 0; }

/* SVG lettering */
.note { font: 8px "Noto Sans CJK SC", sans-serif; fill: #fff; }
.title { font-size: 9px; }
.dim { font: 7px "DejaVu Sans", sans-serif; fill: #fff; text-anchor: middle; }
.bold { font-weight: 700; }
.tag { font: 9px "Liberation Mono", monospace; fill: #fff; text-anchor: middle; }
.elev { font: bold 8px "Liberation Serif", serif; fill: #fff; }

/* Command line */
.command { flex: none; padding-top: 5px; background: #f0f0f0; }
.log { display: flex; justify-content: space-between; height: 59px; margin-top: 1px; padding: 1px 2px 1px 3px; border-top: 1px solid #999; background: #fff; }
.dim-bar { width: 16px; background: #f5f5f5; opacity: .7; }
.prompt { display: flex; height: 22px; border-top: 1px solid #a5a9b0; background: #fff; }
.prompt label { width: 55px; padding: 2px 0 0 8px; background: #ccd0d7; }
.prompt input { flex: 1; min-width: 0; border: 0; background: #fff; padding: 0 4px; outline: 0; }

/* Status bar */
.status { flex: none; height: 19px; display: flex; align-items: stretch; border-top: 1px solid #333; background: linear-gradient(#b8b8b8, #8f8f8f); line-height: 17px; white-space: nowrap; }
.status > * { border-right: 1px solid #dcdcdc; padding-left: 5px; }
.status button { width: 20px; padding: 0 1px; }
.name { width: 174px; }
.page { width: 100px; }
.coords { width: 249px; }
.blank { flex: 1; }
.status .extent { display: flex; align-items: center; padding: 0 2px 0 3px; border-right: 0; }
```
